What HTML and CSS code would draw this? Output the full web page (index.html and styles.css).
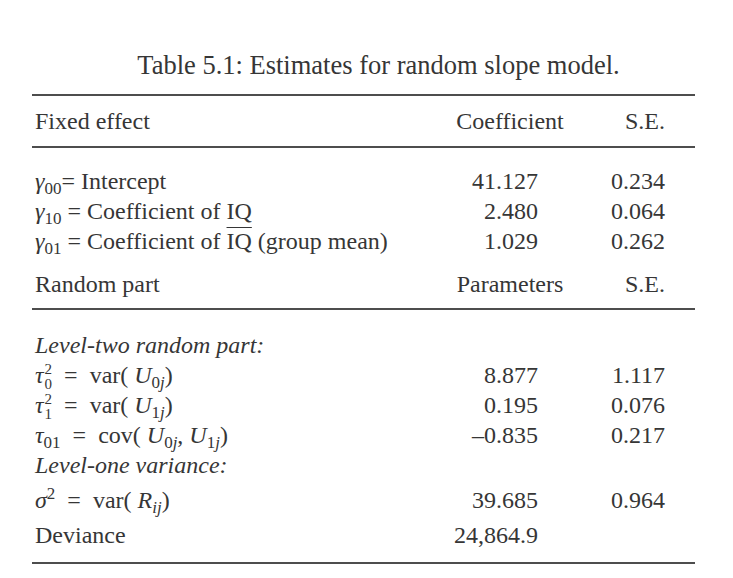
FILE: index.html
```html
<!DOCTYPE html>
<html>
<head>
<meta charset="utf-8">
<link rel="stylesheet" href="styles.css">
</head>
<body>
<div class="page">
  <h1 class="title">Table 5.1: Estimates for random slope model.</h1>
  <div class="table">
    <div class="rule"></div>
    <div class="row head">
      <span class="c1">Fixed effect</span>
      <span class="c2 ctr">Coefficient</span>
      <span class="c3">S.E.</span>
    </div>
    <div class="rule"></div>
    <div class="group fixed">
      <div class="row">
        <span class="c1"><i class="gk">γ</i><span class="sb">00</span>= Intercept</span>
        <span class="c2">41.127</span>
        <span class="c3">0.234</span>
      </div>
      <div class="row">
        <span class="c1"><i class="gk">γ</i><span class="sb">10</span> = Coefficient of IQ</span>
        <span class="c2">2.480</span>
        <span class="c3">0.064</span>
      </div>
      <div class="row">
        <span class="c1"><i class="gk">γ</i><span class="sb">01</span> = Coefficient of <span class="ov">IQ</span> (group mean)</span>
        <span class="c2">1.029</span>
        <span class="c3">0.262</span>
      </div>
    </div>
    <div class="row head2">
      <span class="c1">Random part</span>
      <span class="c2 ctr">Parameters</span>
      <span class="c3">S.E.</span>
    </div>
    <div class="rule"></div>
    <div class="group random">
      <div class="row">
        <span class="c1"><i>Level-two random part:</i></span>
      </div>
      <div class="row">
        <span class="c1"><i class="gk">τ</i><span class="ss"><span>2</span><span>0</span></span> &nbsp;=&nbsp; var( <i>U</i><span class="sb">0<i>j</i></span>)</span>
        <span class="c2">8.877</span>
        <span class="c3">1.117</span>
      </div>
      <div class="row">
        <span class="c1"><i class="gk">τ</i><span class="ss"><span>2</span><span>1</span></span> &nbsp;=&nbsp; var( <i>U</i><span class="sb">1<i>j</i></span>)</span>
        <span class="c2">0.195</span>
        <span class="c3">0.076</span>
      </div>
      <div class="row">
        <span class="c1"><i class="gk">τ</i><span class="sb">01</span> &nbsp;=&nbsp; cov( <i>U</i><span class="sb">0<i>j</i></span>, <i>U</i><span class="sb">1<i>j</i></span>)</span>
        <span class="c2">–0.835</span>
        <span class="c3">0.217</span>
      </div>
      <div class="row">
        <span class="c1"><i>Level-one variance:</i></span>
      </div>
      <div class="row sig">
        <span class="c1"><i class="gk">σ</i><span class="sp">2</span> &nbsp;=&nbsp; var( <i>R</i><span class="sb"><i>ij</i></span>)</span>
        <span class="c2">39.685</span>
        <span class="c3">0.964</span>
      </div>
      <div class="row dev">
        <span class="c1">Deviance</span>
        <span class="c2">24,864.9</span>
        <span class="c3"></span>
      </div>
    </div>
    <div class="rule"></div>
  </div>
</div>
</body>
</html>
```
FILE: styles.css
```css
html, body {
  margin: 0;
  padding: 0;
  background: #ffffff;
}
body {
  font-family: "Liberation Serif", "Times New Roman", serif;
  color: #363636;
  font-size: 24px;
}
.page {
  width: 733px;
  height: 578px;
  overflow: hidden;
  padding-top: 50px;
  box-sizing: border-box;
}
.title {
  margin: 0;
  font-weight: normal;
  font-size: 26.5px;
  line-height: 30px;
  text-align: center;
  padding-left: 24px;
  white-space: nowrap;
}
.table {
  margin: 14px 0 0 32px;
  width: 663px;
}
.rule {
  height: 2px;
  background: #4d4d4d;
}
.row {
  display: grid;
  grid-template-columns: 1fr 140px 115px;
  height: 30px;
  line-height: 30px;
  white-space: nowrap;
}
.c1 {
  padding-left: 3px;
}
.c2 {
  text-align: right;
  padding-right: 42px;
}
.c3 {
  text-align: right;
  padding-right: 30px;
}
.c2.ctr {
  text-align: center;
  padding-right: 0;
  padding-left: 0;
}
.head {
  padding: 10px 0 10px;
}
.fixed {
  padding-top: 18px;
}
.head2 {
  padding: 13px 0 9px;
}
.random {
  padding-top: 20px;
  padding-bottom: 12px;
}
.sig {
  margin-top: 5px;
}
.dev {
  margin-top: 5px;
}
.gk {
  font-style: italic;
}
.sb {
  font-size: 17px;
  position: relative;
  top: 5px;
  line-height: 0;
}
.sp {
  font-size: 17px;
  position: relative;
  top: -9px;
  line-height: 0;
}
.ss {
  display: inline-flex;
  flex-direction: column;
  font-size: 15px;
  line-height: 15px;
  vertical-align: 9px;
  margin-left: 1px;
}
.ov {
  text-decoration: overline;
  text-decoration-thickness: 1px;
}
```
